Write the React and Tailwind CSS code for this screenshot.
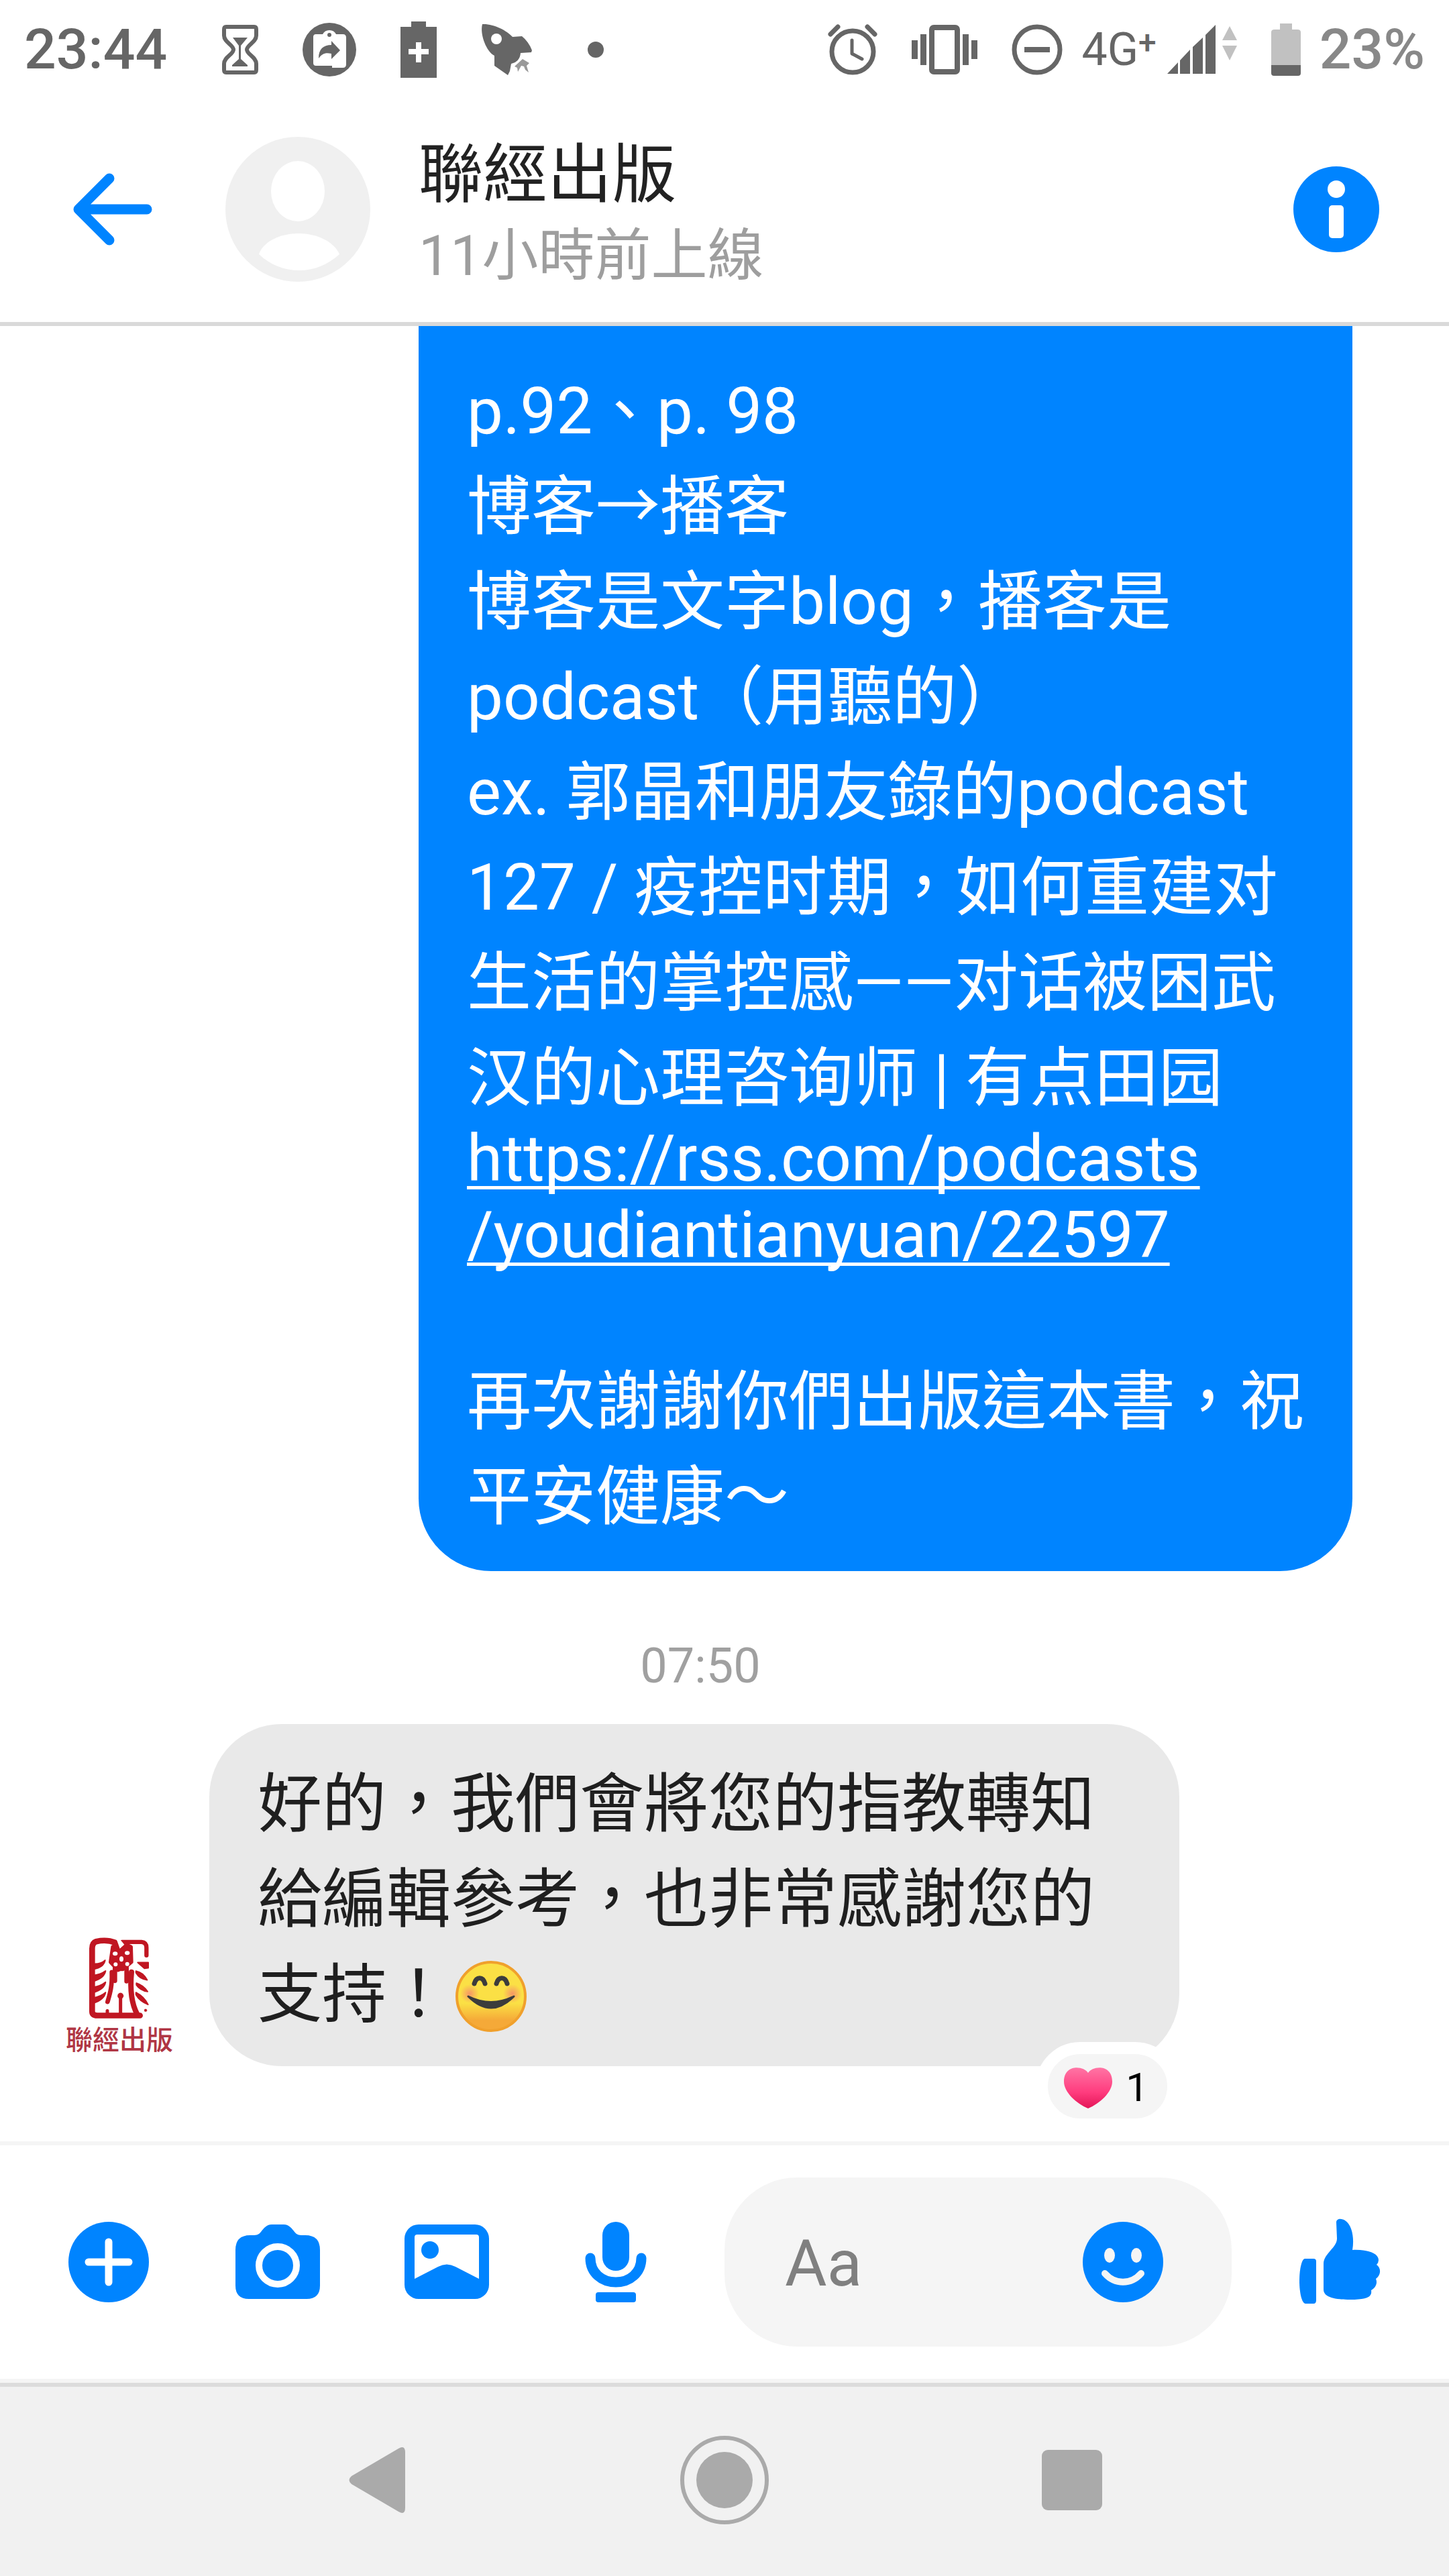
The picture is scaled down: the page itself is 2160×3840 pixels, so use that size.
import { useState } from 'react'

const BOOK_NOTES = [
  'p.92、p. 98',
  '博客→播客',
  '博客是文字blog，播客是',
  'podcast（用聽的）',
  'ex. 郭晶和朋友錄的podcast',
  '127 / 疫控时期，如何重建对',
  '生活的掌控感——对话被困武',
  '汉的心理咨询师 | 有点田园',
]

const CLOSING = ['再次謝謝你們出版這本書，祝', '平安健康～']

/* ---------- status bar icons ---------- */

const HourglassIcon = () => (
  <svg width="54" height="74" viewBox="0 0 54 74" fill="none">
    <path
      d="M6 3H48Q51 3 51 7V16C51 26 37 30 37 37C37 44 51 48 51 58V67Q51 71 48 71H6Q3 71 3 67V58C3 48 17 44 17 37C17 30 3 26 3 16V7Q3 3 6 3Z"
      stroke="#666" strokeWidth="6"
    />
    <path d="M16 19H38L28 31V51L38 60V62H15V60L25 51V31Z" fill="#666" />
  </svg>
)

const ShareBadgeIcon = () => (
  <svg width="80" height="80" viewBox="0 0 80 80">
    <circle cx="40" cy="40" r="40" fill="#666" />
    <path d="M20 17H30Q33 11 40 11Q47 11 50 17H60Q65 17 65 22V62Q65 67 60 67H44V64H20Q16 64 16 60V21Q16 17 20 17Z" fill="#fff" />
    <circle cx="40" cy="18" r="3" fill="#666" />
    <path d="M24 53C24 39 31 33 43 33V27L56 41L43 54V46C34 44 29 46 24 53Z" fill="#666" />
  </svg>
)

const BatteryPlusIcon = () => (
  <svg width="54" height="84" viewBox="0 0 54 84">
    <path d="M16 0H38V8H54V84H0V8H16Z" fill="#666" />
    <path d="M23 31H31V41H42V49H31V61H23V49H12V41H23Z" fill="#fff" />
  </svg>
)

const RocketIcon = () => (
  <svg width="77" height="78" viewBox="0 0 77 78">
    <path
      d="M2 1C18 0 38 10 47 20L61 19Q71 27 76 40L75 43L59 44Q58 57 45 60L43 71L40 77L20 63V48C8 42 -2 16 2 1Z"
      fill="#666"
    />
    <circle cx="23" cy="23" r="8" fill="#fff" />
    <path d="M62 53L72 59L68 63L71 73L66 69L64 64L60 63L55 72L54 66L50 64Z" fill="#999" />
  </svg>
)

const AlarmIcon = () => (
  <svg width="74" height="76" viewBox="0 0 74 76" fill="none" stroke="#666" strokeLinecap="round">
    <circle cx="37" cy="41" r="31" strokeWidth="7" />
    <path d="M4 15L15 4M70 15L59 4" strokeWidth="7" />
    <path d="M36 24V44L51 52" strokeWidth="5" strokeLinejoin="round" />
  </svg>
)

const VibrateIcon = () => (
  <svg width="98" height="74" viewBox="0 0 98 74">
    <rect x="30" y="4" width="38" height="66" rx="3" fill="none" stroke="#666" strokeWidth="8" />
    <path d="M0 23H9V51H0ZM13 14H22V60H13ZM76 14H85V60H76ZM89 23H98V51H89Z" fill="#666" />
  </svg>
)

const DoNotDisturbIcon = () => (
  <svg width="76" height="76" viewBox="0 0 76 76">
    <circle cx="38" cy="38" r="34" fill="none" stroke="#666" strokeWidth="7" />
    <path d="M19 34H57V42H19Z" fill="#666" />
  </svg>
)

const SignalIcon = () => (
  <svg width="104" height="74" viewBox="0 0 104 74">
    <path d="M0 73L16 56V73ZM19 73V53L34 37V73ZM38 73V33L53 19V73ZM57 73V15L72 0V73Z" fill="#666" />
    <path d="M93 2L104 23H82ZM82 31H104L93 53Z" fill="#c1c1c1" />
  </svg>
)

const BatteryIcon = () => (
  <svg width="44" height="78" viewBox="0 0 44 78">
    <path d="M13 0H31V9H39Q44 9 44 13V62H0V13Q0 9 5 9H13Z" fill="#c1c1c1" />
    <path d="M0 62H44V74Q44 78 40 78H4Q0 78 0 74Z" fill="#666" />
  </svg>
)

/* ---------- header icons ---------- */

const BackIcon = () => (
  <svg width="120" height="110" viewBox="0 0 120 110" fill="none" stroke="#0084ff" strokeWidth="15" strokeLinecap="round" strokeLinejoin="round">
    <path d="M55 9L9 55L55 101M12 55H111" />
  </svg>
)

const PersonIcon = () => (
  <svg width="216" height="216" viewBox="0 0 216 216">
    <circle cx="108" cy="108" r="108" fill="#f0f0f0" />
    <ellipse cx="108" cy="81" rx="40" ry="45" fill="#fff" />
    <path d="M50 175C56 156 82 144 109 144C136 144 162 156 170 175C152 191 132 199 110 199C88 199 67 191 50 175Z" fill="#fff" />
  </svg>
)

const InfoIcon = () => (
  <svg width="128" height="128" viewBox="0 0 128 128">
    <circle cx="64" cy="64" r="64" fill="#0084ff" />
    <circle cx="64" cy="34" r="13" fill="#fff" />
    <rect x="53" y="58" width="22" height="49" rx="5" fill="#fff" />
  </svg>
)

/* ---------- message drawings ---------- */

const SmileEmoji = () => (
  <svg role="img" aria-label="😊" className="ml-1.5 inline-block size-[108px] align-[-24px]" viewBox="0 0 108 108">
    <defs>
      <linearGradient id="face" x1="0" y1="0" x2="0" y2="1">
        <stop offset="0.6" stopColor="#fbe045" />
        <stop offset="0.85" stopColor="#f5a938" />
      </linearGradient>
      <radialGradient id="cheek">
        <stop offset="0" stopColor="#f58a6b" stopOpacity="0.85" />
        <stop offset="1" stopColor="#f58a6b" stopOpacity="0" />
      </radialGradient>
    </defs>
    <circle cx="54" cy="54" r="51" fill="url(#face)" stroke="#f0a02c" strokeWidth="4" />
    <circle cx="22" cy="50" r="14" fill="url(#cheek)" />
    <circle cx="86" cy="50" r="14" fill="url(#cheek)" />
    <path d="M29 35C32 24 42 24 45 35M62 35C65 24 75 24 78 35" fill="none" stroke="#3c3c3c" strokeWidth="7" strokeLinecap="round" />
    <path d="M20 54Q54 71 88 54Q54 88 20 54Z" fill="#3c3c3c" stroke="#3c3c3c" strokeWidth="3" strokeLinejoin="round" />
  </svg>
)

const HeartEmoji = () => (
  <svg role="img" aria-label="❤" width="72" height="62" viewBox="0 0 72 62">
    <defs>
      <linearGradient id="heart" x1="0" y1="0" x2="0" y2="1">
        <stop offset="0" stopColor="#ff74a4" />
        <stop offset="0.6" stopColor="#ff3c7e" />
        <stop offset="1" stopColor="#e31557" />
      </linearGradient>
    </defs>
    <path d="M36 9C43 -2 72 -4 72 22C72 38 53 55 36 62C19 55 0 38 0 22C0 -4 29 -2 36 9Z" fill="url(#heart)" />
  </svg>
)

const SealLogo = () => (
  <svg width="94" height="122" viewBox="155 80 282 365" fill="none" stroke="#c01622" strokeLinecap="round" strokeLinejoin="round">
    <path d="M277 103C250 92 215 93 192 98Q174 104 174 130V410Q174 428 197 429H388" strokeWidth="26" />
    <path d="M308 100H395Q417 102 417 125V160" strokeWidth="19" />
    <path d="M378 192L425 192V216L408 218Z" fill="#c01622" strokeWidth="6" />
    <path d="M266 122L256 190L290 226L300 222L312 222L350 190L348 122L318 108H290Z" fill="#c01622" strokeWidth="16" />
    <g fill="#c01622" strokeWidth="6">
      <path d="M180 198Q212 200 232 182Q226 214 180 222Z" />
      <path d="M180 250Q212 246 234 230Q228 262 180 276Z" />
      <path d="M180 302Q212 298 234 280Q228 312 180 326Z" />
      <path d="M180 350Q212 344 234 326Q228 358 180 374Z" />
      <path d="M370 230Q402 236 420 270Q386 266 370 238Z" />
      <path d="M372 284Q404 294 422 322Q388 316 372 292Z" />
      <path d="M370 326Q406 344 424 380Q386 364 370 336Z" />
    </g>
    <path d="M276 215V274M328 215V276M262 235C264 300 254 330 243 368" strokeWidth="20" />
    <path d="M350 235C342 320 352 380 376 424" strokeWidth="24" />
    <path d="M301 345V425M242 408V425" strokeWidth="15" />
    <circle cx="301" cy="341" r="13" fill="#c01622" />
    <circle cx="413" cy="406" r="6" fill="#c01622" />
    <g fill="#fff" stroke="none">
      <ellipse cx="277" cy="152" rx="11" ry="9" />
      <ellipse cx="331" cy="149" rx="11" ry="9" />
      <ellipse cx="305" cy="176" rx="9" ry="12" />
      <ellipse cx="279" cy="200" rx="9" ry="9" />
      <ellipse cx="331" cy="199" rx="9" ry="9" />
      <path d="M284 90L298 130L318 112L300 90Z" />
      <path d="M297 232L288 300L318 300L312 232Z" />
    </g>
  </svg>
)

/* ---------- composer icons ---------- */

const PlusIcon = () => (
  <svg width="120" height="120" viewBox="0 0 120 120">
    <circle cx="60" cy="60" r="60" fill="#0084ff" />
    <path d="M60 30V90M30 60H90" stroke="#fff" strokeWidth="11" strokeLinecap="round" />
  </svg>
)

const CameraIcon = () => (
  <svg width="126" height="120" viewBox="0 0 126 120">
    <path
      d="M54 4H72C80 4 84 10 88 15C91 19 94 20 100 20H104Q126 20 126 42V95Q126 115 106 115H20Q0 115 0 95V42Q0 20 22 20H26C32 20 35 19 38 15C42 10 46 4 54 4Z"
      fill="#0084ff"
    />
    <circle cx="63" cy="65" r="28" fill="none" stroke="#fff" strokeWidth="10" />
  </svg>
)

const PhotoIcon = () => (
  <svg width="126" height="120" viewBox="0 0 126 120">
    <rect y="4" width="126" height="111" rx="21" fill="#0084ff" />
    <path d="M19 19H107Q111 19 111 23V85L76 67Q63 60 50 67L15 85V23Q15 19 19 19Z" fill="#fff" />
    <circle cx="38" cy="42" r="13" fill="#0084ff" />
  </svg>
)

const MicIcon = () => (
  <svg width="92" height="120" viewBox="0 0 92 120">
    <rect x="26" width="40" height="73" rx="20" fill="#0084ff" />
    <path d="M8 54C8 76 25 90 46 90C67 90 84 76 84 54" fill="none" stroke="#0084ff" strokeWidth="15" strokeLinecap="round" />
    <rect x="16" y="105" width="60" height="15" rx="4" fill="#0084ff" />
  </svg>
)

const SmileIcon = () => (
  <svg width="120" height="120" viewBox="0 0 120 120">
    <circle cx="60" cy="60" r="60" fill="#0084ff" />
    <ellipse cx="40" cy="50" rx="8" ry="11" fill="#f5f5f5" />
    <ellipse cx="80" cy="50" rx="8" ry="11" fill="#f5f5f5" />
    <path d="M33 77C48 94 72 94 87 77" fill="none" stroke="#f5f5f5" strokeWidth="10" strokeLinecap="round" />
  </svg>
)

const ThumbIcon = () => (
  <svg width="122" height="130" viewBox="0 0 122 130">
    <path d="M8 60H21Q25 60 25 64V122Q25 127 21 127H9C4 127 0 112 0 93C0 74 4 60 8 60Z" fill="#0084ff" />
    <path
      d="M36 68C36 52 56 44 56 30L55 6C55 -1 64 0 68 3C79 10 82 30 79 47C96 46 118 50 118 62Q118 66 115 69C122 74 122 84 114 90C117 97 113 104 107 107C109 118 98 121 76 121C54 121 36 118 36 106Z"
      fill="#0084ff"
    />
  </svg>
)

const TOOLS = [
  { label: 'More', Icon: PlusIcon },
  { label: 'Camera', Icon: CameraIcon },
  { label: 'Photos', Icon: PhotoIcon },
  { label: 'Voice', Icon: MicIcon },
]

// Outer box sets the CJK line, inner span draws Latin letters in Roboto
const ChineseText = ({ children }) => (
  <div className="font-['Noto_Sans_CJK_TC',sans-serif] text-8xl leading-[142px]">
    <span className="font-[Roboto,'Noto_Sans_CJK_TC',sans-serif] leading-[114px]">{children}</span>
  </div>
)

const StatusBar = () => (
  <div className="flex h-36 items-center justify-between px-9 pt-1 text-[84px] leading-none font-medium text-[#666]">
    <div className="flex items-center gap-[66px]">
      <span className="mr-4">23:44</span>
      <HourglassIcon />
      <ShareBadgeIcon />
      <BatteryPlusIcon />
      <RocketIcon />
      <span className="ml-4 size-6 rounded-full bg-[#666]" />
    </div>
    <div className="flex items-center gap-[51px]">
      <AlarmIcon />
      <VibrateIcon />
      <div className="flex items-center gap-7">
        <DoNotDisturbIcon />
        <div className="flex items-center gap-4">
          <span className="flex text-[68px] font-normal">
            4G<sup className="top-0 text-5xl leading-none font-medium">+</sup>
          </span>
          <SignalIcon />
        </div>
      </div>
      <div className="flex items-center gap-7">
        <BatteryIcon />
        <span className="text-[#888]">23%</span>
      </div>
    </div>
  </div>
)

const Header = () => (
  <header className="flex h-[342px] items-center border-b-6 border-[#d9d9d9] pr-26 pl-27">
    <button aria-label="Back"><BackIcon /></button>
    <div className="ml-27"><PersonIcon /></div>
    <div className="ml-18 flex-1 pt-2">
      <h1 className="text-8xl leading-[132px] text-[#222]">聯經出版</h1>
      <p className="text-[84px] leading-[112px] text-[#9e9e9e]">11小時前上線</p>
    </div>
    <button aria-label="Info"><InfoIcon /></button>
  </header>
)

export default function App() {
  const [draft, setDraft] = useState('')

  return (
    <div lang="zh-Hant" className="flex min-h-screen flex-col bg-white font-[Roboto,'Noto_Sans_CJK_TC',sans-serif]">
      <StatusBar />
      <Header />

      <main className="flex flex-1 flex-col">
        {/* Sent message, its top scrolled under the header */}
        <div className="mr-36 self-end rounded-b-[108px] bg-[#0084ff] px-18 py-12 whitespace-pre text-white">
          <ChineseText>{BOOK_NOTES.join('\n')}</ChineseText>
          <a
            href="https://rss.com/podcasts/youdiantianyuan/22597"
            className="block pb-28 text-8xl leading-[114px] underline decoration-[5px] underline-offset-[8px] [text-decoration-skip-ink:none]"
          >
            {'https://rss.com/podcasts\n/youdiantianyuan/22597'}
          </a>
          <ChineseText>{CLOSING.join('\n')}</ChineseText>
        </div>

        <time className="mt-[100px] mb-11 pr-18 text-center text-7xl leading-[84px] text-[#a0a0a0]">07:50</time>

        {/* Reply */}
        <div className="mb-28 flex items-end gap-6 pl-18">
          <div className="flex size-54 flex-col items-center rounded-full pt-6 pr-1">
            <SealLogo />
            <span className="mt-3 text-[40px] leading-none font-medium text-[#b03644]">聯經出版</span>
          </div>
          <div className="relative max-w-[1446px] rounded-[108px] bg-[#e9e9e9] px-18 pt-10 pb-11 text-[#1f1f1f]">
            <ChineseText>
              好的，我們會將您的指教轉知給編輯參考，也非常感謝您的支持！<SmileEmoji />
            </ChineseText>
            <div className="absolute right-0 -bottom-24 flex h-33 items-center gap-5 rounded-full border-18 border-white bg-[#f5f5f5] pt-1 pr-7 pl-6 text-6xl leading-none text-black">
              <HeartEmoji />
              <span>1</span>
            </div>
          </div>
        </div>
      </main>

      <form className="flex h-[360px] items-center border-y-6 border-[#f5f5f5] pl-9" onSubmit={(e) => e.preventDefault()}>
        {TOOLS.map(({ label, Icon }) => (
          <button key={label} type="button" aria-label={label} className="flex w-63 justify-center">
            <Icon />
          </button>
        ))}
        <div className="ml-9 flex h-63 min-w-0 flex-1 items-center rounded-[108px] bg-[#f5f5f5] pr-[102px] pl-[90px]">
          <input
            aria-label="Message"
            placeholder="Aa"
            value={draft}
            onChange={(e) => setDraft(e.target.value)}
            className="min-w-0 flex-1 bg-transparent pt-1 text-8xl text-[#222] outline-none placeholder:text-[#808080]"
          />
          <button type="button" aria-label="Emoji"><SmileIcon /></button>
        </div>
        <button type="button" aria-label="Like" className="flex w-81 justify-center">
          <ThumbIcon />
        </button>
      </form>

      <nav className="flex h-72 items-center justify-center border-t-6 border-[#dcdcdc] bg-[#f1f1f1] pb-1">
        <button aria-label="Back" className="flex w-[518px] justify-center">
          <svg width="84" height="98" viewBox="0 0 84 98">
            <path d="M74 2Q84 -4 84 8V90Q84 102 74 96L4 55Q-3 49 4 43Z" fill="#aaa" />
          </svg>
        </button>
        <button aria-label="Home" className="flex w-[518px] justify-center">
          <svg width="132" height="132" viewBox="0 0 132 132">
            <circle cx="66" cy="66" r="63" fill="none" stroke="#aaa" strokeWidth="6" />
            <circle cx="66" cy="66" r="42" fill="#aaa" />
          </svg>
        </button>
        <button aria-label="Recent apps" className="flex w-[518px] justify-center">
          <span className="size-[90px] rounded-[9px] bg-[#aaa]" />
        </button>
      </nav>
    </div>
  )
}
